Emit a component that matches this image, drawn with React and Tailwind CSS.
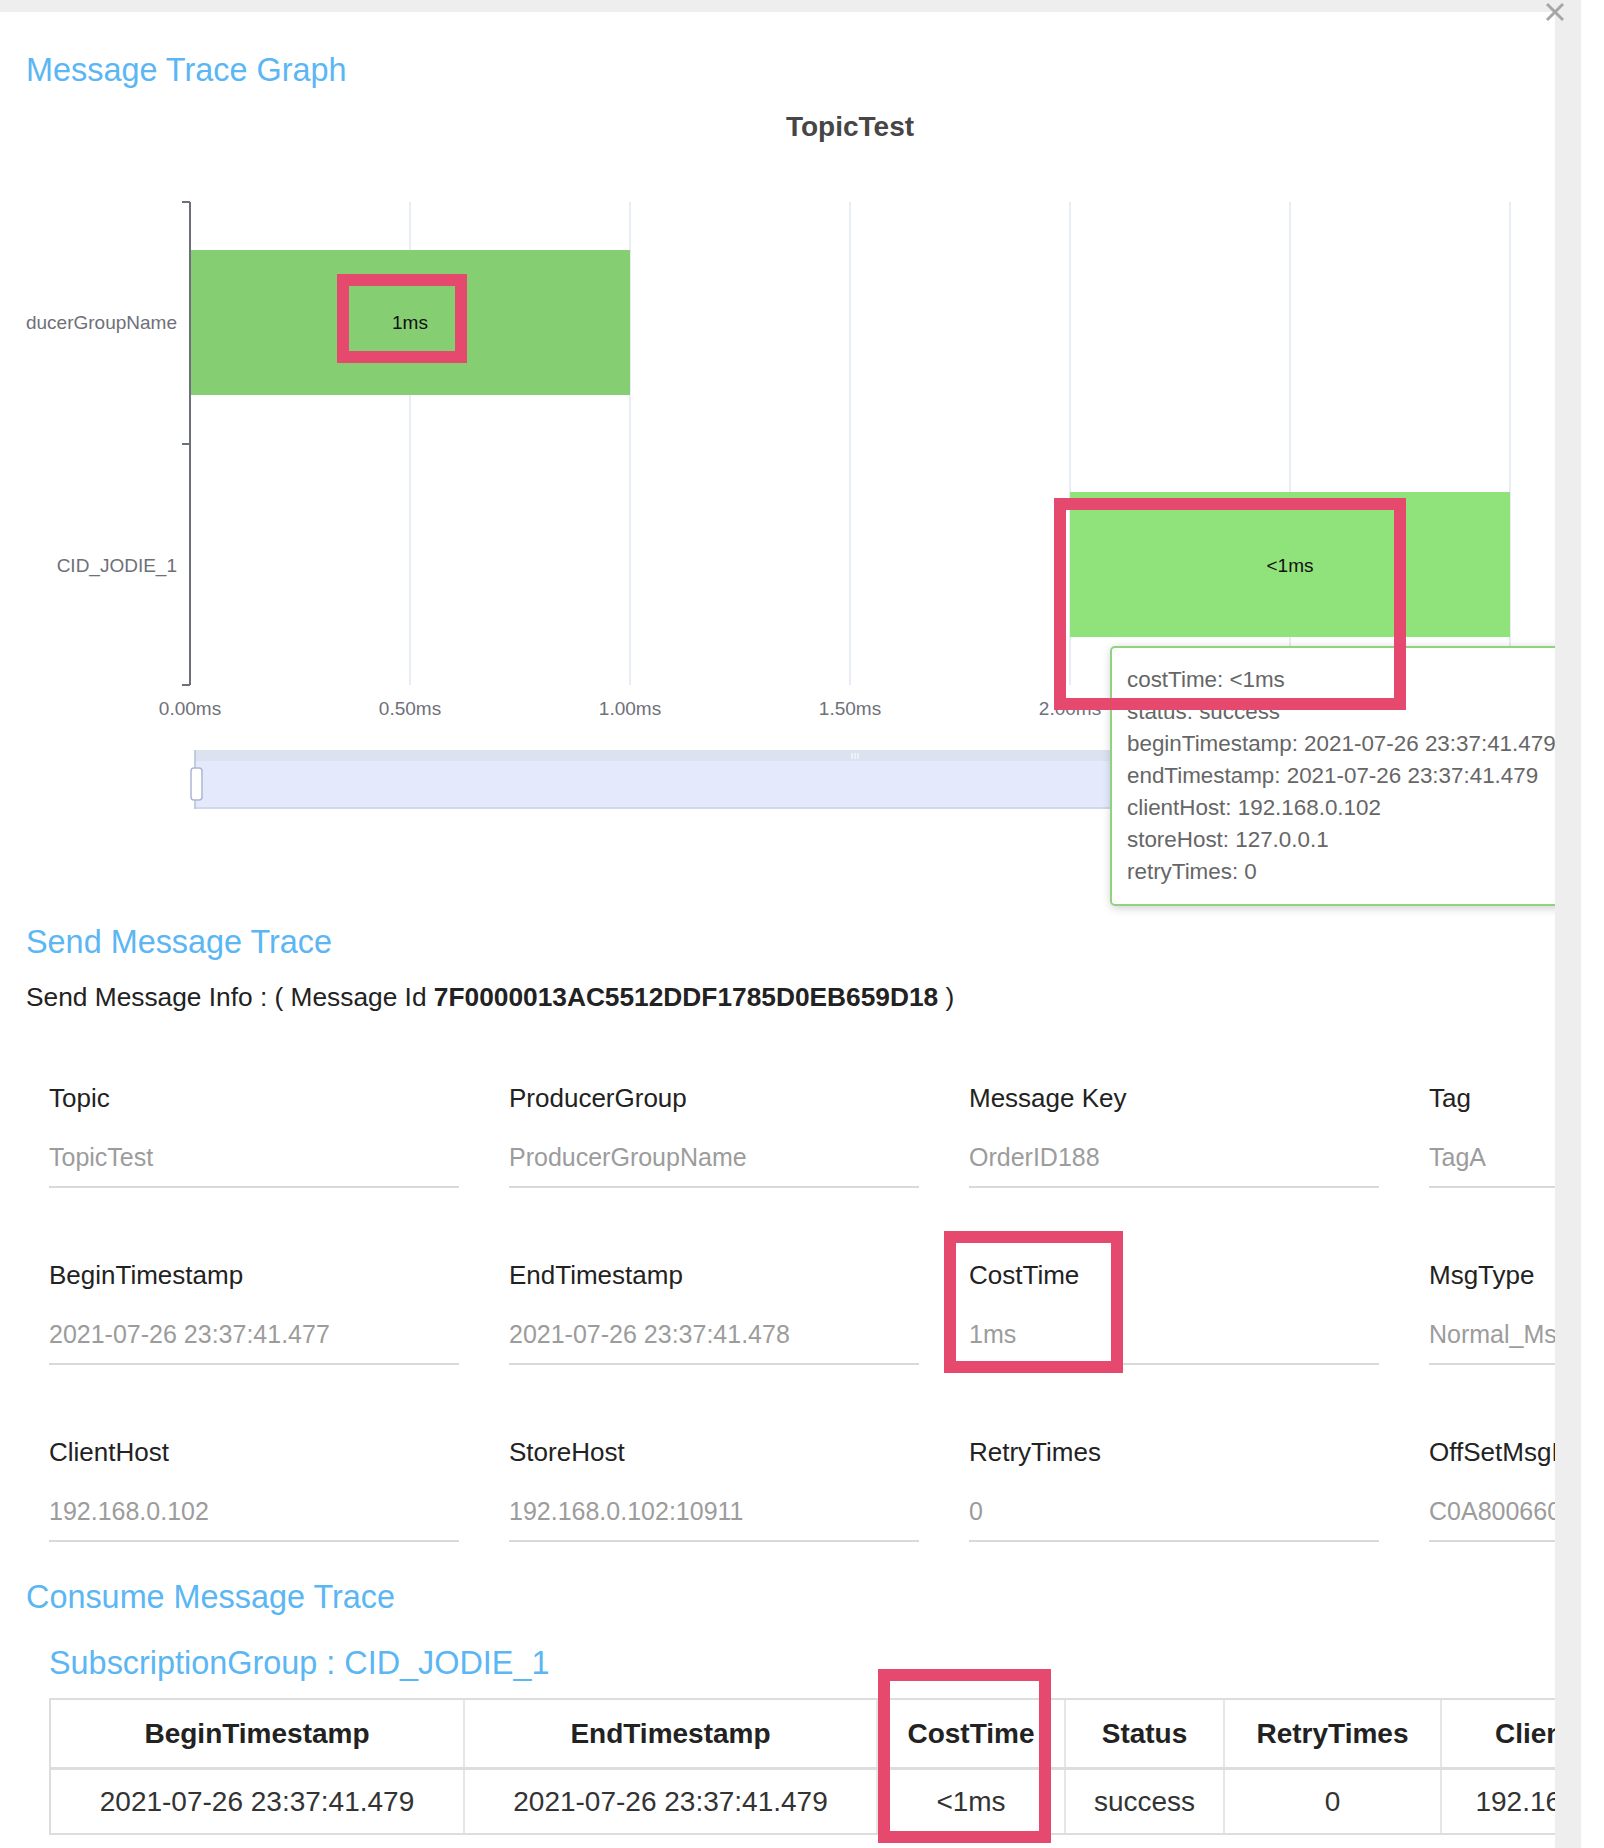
import React from "react";

const fields = [
	["Topic", "TopicTest"],
	["ProducerGroup", "ProducerGroupName"],
	["Message Key", "OrderID188"],
	["Tag", "TagA"],
	["BeginTimestamp", "2021-07-26 23:37:41.477"],
	["EndTimestamp", "2021-07-26 23:37:41.478"],
	["CostTime", "1ms"],
	["MsgType", "Normal_Msg"],
	["ClientHost", "192.168.0.102"],
	["StoreHost", "192.168.0.102:10911"],
	["RetryTimes", "0"],
	["OffSetMsgId", "C0A8006600002A9F0000000000000A4E"],
];

const columns = [
	{ title: "BeginTimestamp", value: "2021-07-26 23:37:41.479", width: "w-[414px]" },
	{ title: "EndTimestamp", value: "2021-07-26 23:37:41.479", width: "w-[413px]" },
	{ title: "CostTime", value: "<1ms", width: "w-[188px]" },
	{ title: "Status", value: "success", width: "w-[159px]" },
	{ title: "RetryTimes", value: "0", width: "w-[217px]" },
	{ title: "ClientHost", value: "192.168.0.102", width: "w-[248px]" },
	{ title: "StoreHost", value: "127.0.0.1:10911", width: "w-[240px]" },
];

const tooltipLines = [
	"costTime: <1ms",
	"status: success",
	"beginTimestamp: 2021-07-26 23:37:41.479",
	"endTimestamp: 2021-07-26 23:37:41.479",
	"clientHost: 192.168.0.102",
	"storeHost: 127.0.0.1",
	"retryTimes: 0",
];

const gridX = [410, 630, 850, 1070, 1290, 1510];
const xLabels = ["0.00ms", "0.50ms", "1.00ms", "1.50ms", "2.00ms", "2.50ms", "3.00ms"];

function TraceChart() {
	return (
		<div className="relative ml-[26px] h-[832px] w-[1529px] overflow-hidden">
			<svg width="1529" height="832" viewBox="26 88 1529 832" className="block">
				<text x="850" y="126" textAnchor="middle" dominantBaseline="central" fontSize="28" fontWeight="700" fill="#464646">
					TopicTest
				</text>

				{gridX.map((x) => (
					<line key={x} x1={x} y1="202" x2={x} y2="685" stroke="#e0e6f1" strokeWidth="1.5" />
				))}

				<rect x="190" y="250" width="440" height="145" fill="#86ce72" />
				<rect x="1070" y="492" width="440" height="145" fill="#90e27b" />
				<text x="410" y="322" textAnchor="middle" dominantBaseline="central" fontSize="19" fill="#111">
					1ms
				</text>
				<text x="1290" y="565" textAnchor="middle" dominantBaseline="central" fontSize="19" fill="#111">
					{"<1ms"}
				</text>

				<line x1="190" y1="202" x2="190" y2="685" stroke="#6e7079" strokeWidth="2" />
				{[202, 444, 685].map((y) => (
					<line key={y} x1="182" y1={y} x2="190" y2={y} stroke="#6e7079" strokeWidth="2" />
				))}

				<text x="177" y="322" textAnchor="end" dominantBaseline="central" fontSize="19" fill="#6e7079">
					ProducerGroupName
				</text>
				<text x="177" y="565" textAnchor="end" dominantBaseline="central" fontSize="19" fill="#6e7079">
					CID_JODIE_1
				</text>

				{xLabels.map((label, i) => (
					<text key={label} x={190 + i * 220} y="708" textAnchor="middle" dominantBaseline="central" fontSize="19" fill="#6e7079">
						{label}
					</text>
				))}

				{/* data zoom slider */}
				<rect x="195" y="750" width="1320" height="11" fill="#dce2f0" />
				<rect x="195" y="761" width="1320" height="47" fill="#e4e9fc" />
				<line x1="195" y1="808" x2="1515" y2="808" stroke="#cfd7eb" strokeWidth="2" />
				<line x1="195" y1="750" x2="195" y2="809" stroke="#b4bfd6" strokeWidth="1.5" />
				{[852, 855, 858].map((x) => (
					<line key={x} x1={x} y1="753" x2={x} y2="759" stroke="#ffffff" strokeWidth="1" />
				))}
				<rect x="191" y="768" width="11" height="32" rx="3" fill="#ffffff" stroke="#acb8d1" strokeWidth="1.5" />
			</svg>

			<div className="absolute left-[1084px] top-[558px] h-[260px] w-[500px] rounded-[5px] border-2 border-[#8fd47c] bg-white pl-[15px] pt-[16px] shadow-[1px_2px_10px_rgba(0,0,0,0.2)]">
				{tooltipLines.map((line) => (
					<div key={line} className="whitespace-nowrap text-[22.4px] leading-[32px] text-[#666]">
						{line}
					</div>
				))}
			</div>
		</div>
	);
}

export default function App() {
	return (
		<div className="relative h-[1848px] w-[1604px] overflow-hidden bg-white font-['Liberation_Sans',Arial,sans-serif]">
			<div className="flex h-full">
				<div className="h-full w-[1555px] shrink-0 overflow-hidden">
					<div className="h-[12px] bg-[#eeeeee]" />

					<h3 className="ml-[26px] mt-[40px] text-[32.4px] leading-[36px] text-[#5bb6f4]">Message Trace Graph</h3>
					<TraceChart />

					<h3 className="ml-[26px] mt-[4px] text-[32.4px] leading-[36px] text-[#5bb6f4]">Send Message Trace</h3>
					<p className="ml-[26px] mt-[22px] whitespace-nowrap text-[26.3px] leading-[30px] text-[#222]">
						Send Message Info : ( Message Id <b>7F0000013AC5512DDF1785D0EB659D18</b> )
					</p>

					<div className="ml-[49px] mt-[71px] grid w-max grid-cols-[repeat(4,410px)] gap-x-[50px] gap-y-[72px]">
						{fields.map(([label, value]) => (
							<div key={label} className="border-b-2 border-[#d9d9d9] pb-[14px]">
								<div className="whitespace-nowrap text-[26px] leading-[30px] text-[#222]">{label}</div>
								<div className="mt-[29px] whitespace-nowrap text-[25px] leading-[30px] text-[#9c9c9c]">{value}</div>
							</div>
						))}
					</div>

					<h3 className="ml-[26px] mt-[37px] text-[32.4px] leading-[36px] text-[#5bb6f4]">Consume Message Trace</h3>
					<h4 className="ml-[49px] mt-[30px] text-[32.4px] leading-[36px] text-[#5bb6f4]">SubscriptionGroup : CID_JODIE_1</h4>

					<div className="ml-[49px] mt-[17px] w-max border-y-2 border-l-2 border-[#dddddd]">
						<div className="flex h-[70px] border-b-[3px] border-[#dddddd]">
							{columns.map((col) => (
								<div key={col.title} className={`${col.width} flex shrink-0 items-center justify-center border-r-2 border-[#e6e6e6] text-[28px] font-bold text-[#222]`}>
									{col.title}
								</div>
							))}
						</div>
						<div className="flex h-[63px]">
							{columns.map((col) => (
								<div key={col.title} className={`${col.width} flex shrink-0 items-center justify-center border-r-2 border-[#e6e6e6] text-[28px] text-[#333]`}>
									{col.value}
								</div>
							))}
						</div>
					</div>
				</div>
				<div className="h-full w-[26px] shrink-0 bg-[#eeeeee]" />
			</div>

			{/* close button */}
			<button className="absolute left-[1545px] top-[2px] h-[20px] w-[20px]" aria-label="Close">
				<svg width="20" height="20" viewBox="0 0 20 20">
					<path d="M2 2 L18 18 M18 2 L2 18" stroke="#a6a6a6" strokeWidth="3" />
				</svg>
			</button>

			{/* highlight boxes */}
			<div className="absolute left-[337px] top-[274px] h-[89px] w-[130px] border-[12px] border-[#e5496e]" />
			<div className="absolute left-[1054px] top-[498px] h-[212px] w-[352px] border-[12px] border-[#e5496e]" />
			<div className="absolute left-[944px] top-[1231px] h-[142px] w-[179px] border-[12px] border-[#e5496e]" />
			<div className="absolute left-[878px] top-[1669px] h-[174px] w-[173px] border-[12px] border-[#e5496e]" />
		</div>
	);
}
